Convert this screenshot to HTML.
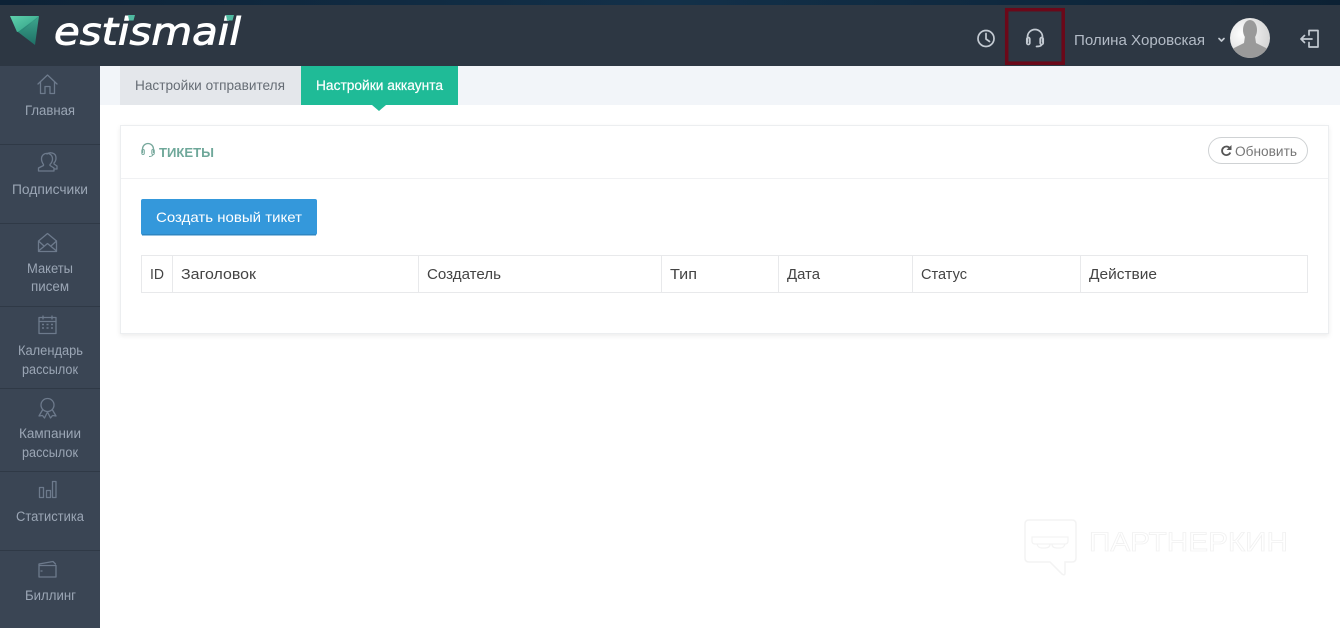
<!DOCTYPE html>
<html lang="ru"><head><meta charset="utf-8"><title>Тикеты</title>
<style>
html,body{margin:0;padding:0;background:#fff;width:1340px;height:628px;overflow:hidden}
svg{display:block}
text{font-family:"Liberation Sans",sans-serif;white-space:pre}
.s{font-size:13.5px;fill:#9ba6b5;text-anchor:start}
.ic{fill:none;stroke:#6d7a8c;stroke-width:1.3;stroke-linejoin:round;stroke-linecap:round}
.h{fill:none;stroke:#c3cad2;stroke-width:1.7;stroke-linecap:round;stroke-linejoin:round}
.th{font-size:14.5px;fill:#444}
</style></head><body>
<svg width="1340" height="628" viewBox="0 0 1340 628" xmlns="http://www.w3.org/2000/svg">
<defs>
<linearGradient id="top" x1="0" x2="1" y1="0" y2="0"><stop offset="0" stop-color="#0d2236"/><stop offset=".5" stop-color="#123049"/><stop offset="1" stop-color="#0c2134"/></linearGradient>
<linearGradient id="g1" x1="0" x2="1" y1="0" y2="1"><stop offset="0" stop-color="#5fd0ac"/><stop offset="1" stop-color="#2f9d84"/></linearGradient>
<linearGradient id="g2" x1="0" x2="0" y1="0" y2="1"><stop offset="0" stop-color="#3ea88e"/><stop offset="1" stop-color="#1f6f66"/></linearGradient>
<radialGradient id="av" cx=".3" cy=".4" r=".8"><stop offset="0" stop-color="#fff"/><stop offset="1" stop-color="#cfcfcf"/></radialGradient>
<clipPath id="avc"><circle cx="1250" cy="38" r="20"/></clipPath>
<filter id="sh" x="-2%" y="-5%" width="104%" height="110%"><feDropShadow dx="0" dy="2" stdDeviation="2" flood-color="#000" flood-opacity=".07"/></filter>
</defs>

<rect width="1340" height="628" fill="#fff"/>
<!-- header -->
<rect width="1340" height="6" fill="url(#top)"/>
<rect y="5" width="1340" height="61" fill="#2d3743"/>
<path d="M10 16H39L22 31 17 32Z" fill="url(#g1)"/>
<path d="M39 16 35 45 18 32Z" fill="url(#g2)"/>
<path d="M39 16 22 31 18 32 35 20Z" fill="#2a8b78"/>
<text x="54" y="44.500" font-size="37" font-style="italic" fill="#fff" stroke="#fff" stroke-width=".9" style="font-family:'DejaVu Sans',sans-serif" textLength="187" lengthAdjust="spacingAndGlyphs">estismail</text>
<path d="M128 15h7l-1.500 5.500H129zM226 15h8l-1.500 5.500H227z" fill="#4fb9a0"/>

<!-- header right -->
<circle cx="986" cy="38.500" r="8" class="h"/>
<path d="M986 33.500v5.500l3.500 2.500" class="h"/>
<rect x="1006.700" y="9.700" width="56.500" height="53.500" fill="none" stroke="#6b0819" stroke-width="3.500"/>
<path d="M1027.500 42v-5a7.500 7.500 0 0 1 15 0v5" class="h"/>
<rect x="1026.800" y="37.500" width="3" height="7" rx="1.500" class="h"/>
<rect x="1040.200" y="37.500" width="3" height="7" rx="1.500" class="h"/>
<path d="M1041.500 45q-1 1.500-5 1.500" class="h"/>
<text x="1074" y="45" font-size="15" fill="#b3bbc6" textLength="131" lengthAdjust="spacingAndGlyphs">Полина Хоровская</text>
<path d="M1219 38.500l2.500 2.500 2.500-2.500" class="h" stroke-width="1.400"/>
<circle cx="1250" cy="38" r="20" fill="url(#av)"/>
<g clip-path="url(#avc)" fill="#9a9a9a">
<ellipse cx="1250" cy="30" rx="7" ry="10"/>
<path d="M1245 36h10l1 7 12 6v10h-36V49l12-6z"/>
</g>
<path d="M1309 30.500h9v16.500h-9v-4.500M1309 30.500v4.500M1301 39h11M1301 39l3.500-3.500M1301 39l3.500 3.500" class="h" stroke-width="1.300"/>

<!-- sidebar -->
<rect y="66" width="100" height="562" fill="#3a4554"/>
<g stroke="#2f3946" stroke-width="1">
<path d="M0 144.500h100M0 223.500h100M0 306.500h100M0 388.500h100M0 471.500h100M0 550.500h100"/>
</g>
<path d="M38 84 47.500 75 57 84M40.500 82v11.500h4.500v-7h5v7h4.500V82" class="ic"/>
<text class="s" x="25" y="115" textLength="50" lengthAdjust="spacingAndGlyphs">Главная</text>

<path d="M41.500 159c0-7.500 11-7.500 11 0 0 2.500-1 4-2.500 5.500v1l4 2.500v3H38.500v-3l5-2.500v-1C42.500 163 41.500 161.500 41.500 159z" class="ic"/>
<path d="M47 154c2-2 9-2 9 4 0 2.500-1 4-2 5v1l3 2v3h-3" class="ic"/>
<text class="s" x="12" y="194" textLength="76" lengthAdjust="spacingAndGlyphs">Подписчики</text>

<path d="M38.500 241 47.500 233.500 56.500 241V251.500H38.500ZM38.500 251 47.500 243.500 56.500 251M38.500 241 44 246M56.500 241 51 246" class="ic"/>
<text class="s" x="27" y="273" textLength="46" lengthAdjust="spacingAndGlyphs">Макеты</text>
<text class="s" x="31" y="291" textLength="38" lengthAdjust="spacingAndGlyphs">писем</text>

<rect x="39" y="317.500" width="17" height="16" class="ic"/>
<path d="M39 321.500h17M43 316v3M52 316v3" class="ic"/>
<path d="M42 324.500h2M46.500 324.500h2M51 324.500h2M42 328h2M46.500 328h2M51 328h2" stroke="#6d7a8c" stroke-width="1.500" fill="none"/>
<text class="s" x="18" y="355" textLength="65" lengthAdjust="spacingAndGlyphs">Календарь</text>
<text class="s" x="22" y="374" textLength="56" lengthAdjust="spacingAndGlyphs">рассылок</text>

<circle cx="47.500" cy="405" r="6.500" class="ic"/>
<path d="M42.500 410 39 416l3.500-.5 2 2.500 3-6 3 6 2-2.500 3.500.5-3.500-6" class="ic"/>
<text class="s" x="19" y="438" textLength="62" lengthAdjust="spacingAndGlyphs">Кампании</text>
<text class="s" x="22" y="457" textLength="56" lengthAdjust="spacingAndGlyphs">рассылок</text>

<rect x="39.500" y="487.500" width="4" height="10" class="ic"/>
<rect x="46.500" y="490.500" width="4" height="7" class="ic"/>
<rect x="52.500" y="481.500" width="3.500" height="16" class="ic"/>
<text class="s" x="16" y="521" textLength="68" lengthAdjust="spacingAndGlyphs">Статистика</text>

<path d="M39 566v-2l14-2.500 2.500 2.500M39 565.500h17v11.500H39Z" class="ic"/>
<path d="M41 571h1" class="ic"/>
<text class="s" x="25" y="600" textLength="51" lengthAdjust="spacingAndGlyphs">Биллинг</text>

<!-- tab strip -->
<rect x="100" y="66" width="1240" height="39" fill="#f2f5f9"/>
<rect x="120" y="66" width="181" height="39" fill="#e4e7eb"/>
<text x="135" y="90" font-size="13.500" fill="#666d75" textLength="150" lengthAdjust="spacingAndGlyphs">Настройки отправителя</text>
<rect x="301" y="66" width="157" height="39" fill="#1fbb97"/>
<path d="M372 105h14l-7 6z" fill="#1fbb97"/>
<text x="316" y="90" font-size="13.500" fill="#fff" stroke="#fff" stroke-width=".2" textLength="127" lengthAdjust="spacingAndGlyphs">Настройки аккаунта</text>

<!-- card -->
<rect x="120.500" y="125.500" width="1208" height="208" fill="#fff" stroke="#eceef0" filter="url(#sh)"/>
<path d="M121 178.500h1207" stroke="#f0f1f3"/>
<path d="M142.500 153v-4a5.500 5.500 0 0 1 11 0v4" fill="none" stroke="#77a89c" stroke-width="1.300"/>
<rect x="141.800" y="149.500" width="2.500" height="5" rx="1.200" fill="none" stroke="#77a89c"/>
<rect x="151.800" y="149.500" width="2.500" height="5" rx="1.200" fill="none" stroke="#77a89c"/>
<path d="M153 155q-1 1.500-4 1.500" fill="none" stroke="#77a89c"/>
<text x="159" y="157" font-size="13" font-weight="700" fill="#6fa89a" textLength="55" lengthAdjust="spacingAndGlyphs">ТИКЕТЫ</text>

<rect x="1208.500" y="137.500" width="99" height="26" rx="13" fill="#fff" stroke="#cfd2d4"/>
<path d="M1230 148.500a4.300 4.300 0 1 0 .3 4" fill="none" stroke="#555" stroke-width="1.800"/>
<path d="M1231.500 145v5h-5z" fill="#555"/>
<text x="1235" y="156" font-size="13.500" fill="#777" textLength="62" lengthAdjust="spacingAndGlyphs">Обновить</text>

<rect x="141" y="199" width="176" height="36" rx="2" fill="#3498db"/>
<rect x="142" y="234" width="174" height="1.500" fill="#2d86c2"/>
<text x="156" y="222" font-size="14" fill="#fff" textLength="146" lengthAdjust="spacingAndGlyphs">Создать новый тикет</text>

<!-- table -->
<rect x="141.500" y="255.500" width="1166" height="37" fill="#fff" stroke="#e8e9eb"/>
<path d="M172.500 255v37M418.500 255v37M661.500 255v37M778.500 255v37M912.500 255v37M1080.500 255v37" stroke="#e8e9eb"/>
<text class="th" x="150" y="279" textLength="14" lengthAdjust="spacingAndGlyphs">ID</text>
<text class="th" x="181" y="279" textLength="75" lengthAdjust="spacingAndGlyphs">Заголовок</text>
<text class="th" x="427" y="279" textLength="74" lengthAdjust="spacingAndGlyphs">Создатель</text>
<text class="th" x="670" y="279" textLength="27" lengthAdjust="spacingAndGlyphs">Тип</text>
<text class="th" x="787" y="279" textLength="33" lengthAdjust="spacingAndGlyphs">Дата</text>
<text class="th" x="921" y="279" textLength="46" lengthAdjust="spacingAndGlyphs">Статус</text>
<text class="th" x="1089" y="279" textLength="68" lengthAdjust="spacingAndGlyphs">Действие</text>

<!-- watermark -->
<path d="M1029 520h43q4 0 4 4v34q0 4-4 4h-7v11q0 3-3 1l-12-12h-21q-4 0-4-4v-34q0-4 4-4z" fill="none" stroke="#f3f3f3" stroke-width="1.500"/>
<path d="M1032 537h36v4q0 3-3 3h-30q-3 0-3-3zM1037 544q1 4 5 4h3q5 0 5-4M1052 544q0 4 5 4h3q4 0 5-4" fill="none" stroke="#f3f3f3" stroke-width="1.200"/>
<text x="1089" y="551" font-size="27" fill="#fff" stroke="#f1f1f1" stroke-width=".8" textLength="199" lengthAdjust="spacingAndGlyphs">ПАРТНЕРКИН</text>
</svg>
</body></html>
